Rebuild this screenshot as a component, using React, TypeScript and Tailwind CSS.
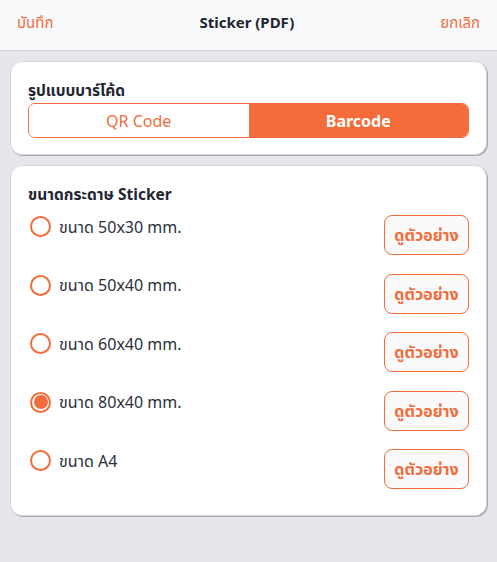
import React from "react";

const sizes = [
  { label: "ขนาด 50x30 mm.", checked: false },
  { label: "ขนาด 50x40 mm.", checked: false },
  { label: "ขนาด 60x40 mm.", checked: false },
  { label: "ขนาด 80x40 mm.", checked: true },
  { label: "ขนาด A4", checked: false },
];

export default function App() {
  return (
    <div
      className="w-[497px] h-[562px] bg-[#e6e7eb] flex flex-col"
      style={{ fontFamily: '"Noto Sans", "Noto Sans Thai", "Noto Sans Thai UI", Tahoma, sans-serif' }}
    >
      <div className="h-[51px] bg-[#f8f9fb] border-b border-[#d3d5db] flex items-center justify-between px-[17px] pb-[5px] shrink-0">
        <span className="text-[15px] text-[#f26c3c]">บันทึก</span>
        <span className="text-[15px] font-bold text-[#1f2533]">Sticker (PDF)</span>
        <span className="text-[15px] text-[#f26c3c]">ยกเลิก</span>
      </div>

      <div className="px-[10px] pt-[10px] flex flex-col gap-[10px]">
        <div className="bg-white rounded-[12px] border border-[#d6d7dc] shadow-[1px_1px_0_#a9abb3] px-[17px] pt-[16px] pb-[16px]">
          <div className="text-[15.5px] font-bold text-[#1f2533] leading-[24px]">รูปแบบบาร์โค้ด</div>
          <div className="mt-[1px] flex h-[35px] rounded-[7px] border border-[#f26c3c] overflow-hidden">
            <div className="flex-1 flex items-center justify-center text-[16px] text-[#f26c3c] bg-white">QR Code</div>
            <div className="flex-1 flex items-center justify-center text-[16px] font-bold text-white bg-[#f36c3a]">Barcode</div>
          </div>
        </div>

        <div className="bg-white rounded-[12px] border border-[#d6d7dc] shadow-[1px_1px_0_#a9abb3] px-[17px] pt-[16px] pb-[26px]">
          <div className="text-[15.5px] font-bold text-[#1f2533] leading-[24px]">ขนาดกระดาษ Sticker</div>
          <div className="mt-[9px] flex flex-col gap-[18.5px]">
            {sizes.map((s) => (
              <div key={s.label} className="flex items-start justify-between">
                <div className="flex items-center gap-[8px] pt-[1px]">
                  <div className="w-[21px] h-[21px] rounded-full border-2 border-[#f36c3a] ml-[2px] flex items-center justify-center">
                    {s.checked && <div className="w-[14px] h-[14px] rounded-full bg-[#f36c3a]" />}
                  </div>
                  <span className="text-[16px] text-[#2a2f3a] leading-[20px]">{s.label}</span>
                </div>
                <button className="w-[85px] h-[40px] rounded-[8px] border border-[#f36c3a] bg-[#fafafa] text-[16px] font-bold text-[#f26c3c] flex items-center justify-center">
                  ดูตัวอย่าง
                </button>
              </div>
            ))}
          </div>
        </div>
      </div>
    </div>
  );
}
